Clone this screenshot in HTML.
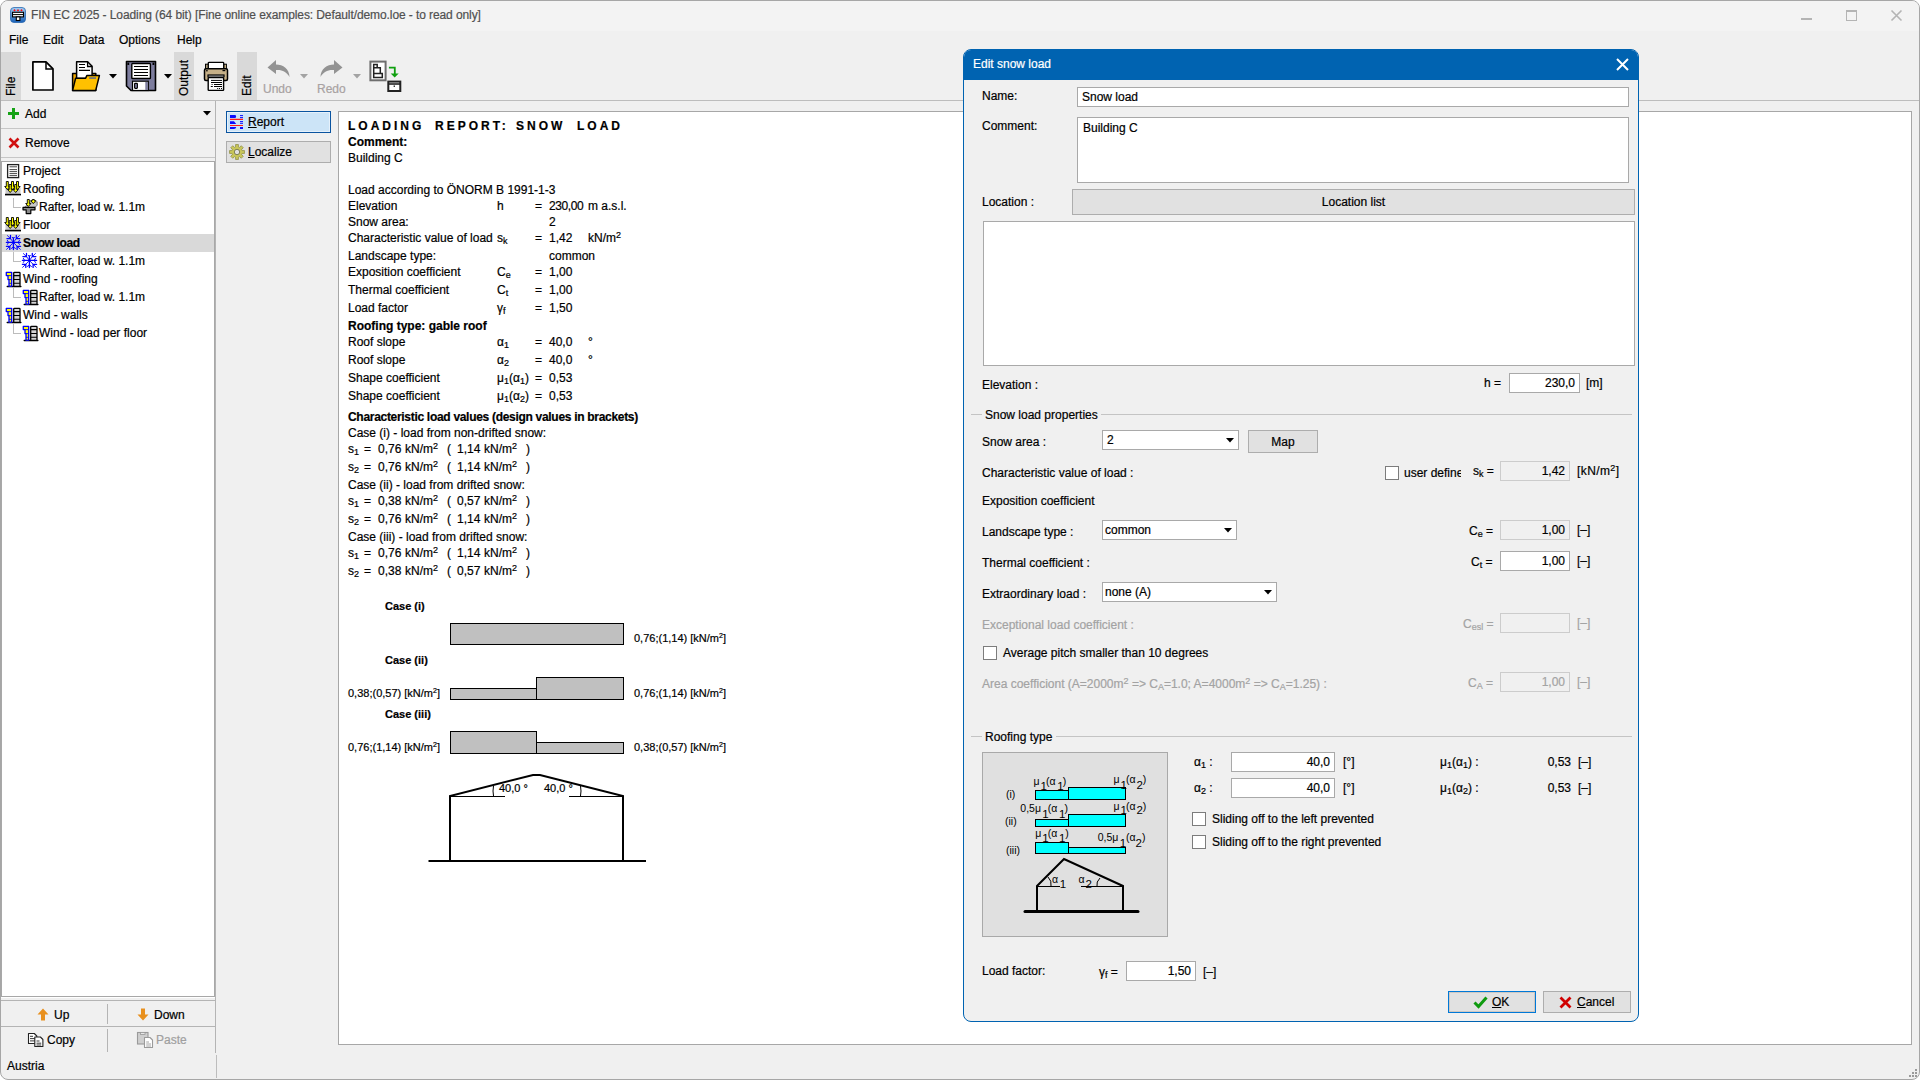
<!DOCTYPE html><html><head><meta charset="utf-8"><title>FIN EC Loading</title><style>html,body{margin:0;padding:0;width:1920px;height:1080px;overflow:hidden;background:#ffffff}
.a{position:absolute;box-sizing:border-box;display:block}
.t{position:absolute;white-space:pre;font-family:"Liberation Sans",sans-serif;-webkit-text-stroke:0.2px currentColor}
.sb{font-size:9px;position:relative;top:2px}
.sp{font-size:9px;position:relative;top:-4px}
.sp2{font-size:7px;position:relative;top:-4px}
u{text-decoration:underline;text-underline-offset:1px}
svg.a{overflow:visible}</style></head><body><div class="a" style="left:0;top:0;width:1920px;height:1080px;border:1px solid #a6a6a6;border-radius:8px;background:#f0f0f0;overflow:hidden">
<div class="a" style="left:0;top:0;width:1918px;height:30px;background:#f3f3f3"></div>
</div>
<svg class="a" style="left:10px;top:7px;" width="16" height="16" viewBox="0 0 16 16">
<defs><linearGradient id="gi" x1="0" y1="0" x2="0" y2="1"><stop offset="0" stop-color="#a8d0f4"/><stop offset="1" stop-color="#1860b8"/></linearGradient></defs>
<rect x="0.5" y="0.5" width="15" height="15" rx="3.5" fill="url(#gi)" stroke="#2a68b0" stroke-width="0.8"/>
<path d="M4.5 4.5 l-1.2 -1 1.2 -1.5 1.2 1.5 z M8 4.5 l-1.2 -1 1.2 -1.5 1.2 1.5 z M11.5 4.5 l-1.2 -1 1.2 -1.5 1.2 1.5 z" fill="#ff1010"/>
<rect x="2.5" y="5.3" width="11" height="4.6" fill="#fff" stroke="#000" stroke-width="1.1"/>
<line x1="3" y1="7.6" x2="13" y2="7.6" stroke="#000" stroke-width="1"/>
<rect x="6.3" y="9.9" width="3.6" height="3.6" fill="#fff" stroke="#000" stroke-width="1.1"/>
</svg>
<div class="t" style="left:31px;top:9px;font-size:12px;line-height:12px;font-weight:400;color:#505050;letter-spacing:-0.09px">FIN EC 2025 - Loading (64 bit) [Fine online examples: Default/demo.loe - to read only]</div>
<div class="a" style="left:1801px;top:18px;width:11px;height:2px;background:#b4b4b4"></div>
<div class="a" style="left:1846px;top:10px;width:11px;height:11px;border:1px solid #b4b4b4;border-top-width:2px"></div>
<svg class="a" style="left:1890px;top:9px;" width="13" height="13" viewBox="0 0 13 13"><path d="M1.5 1.5 L11.5 11.5 M11.5 1.5 L1.5 11.5" stroke="#b4b4b4" stroke-width="1.6"/></svg>
<div class="t" style="left:9px;top:34px;font-size:12px;line-height:12px;font-weight:400;color:#000;">File</div>
<div class="t" style="left:43px;top:34px;font-size:12px;line-height:12px;font-weight:400;color:#000;">Edit</div>
<div class="t" style="left:79px;top:34px;font-size:12px;line-height:12px;font-weight:400;color:#000;">Data</div>
<div class="t" style="left:119px;top:34px;font-size:12px;line-height:12px;font-weight:400;color:#000;">Options</div>
<div class="t" style="left:177px;top:34px;font-size:12px;line-height:12px;font-weight:400;color:#000;">Help</div>
<div class="a" style="left:1px;top:100px;width:1918px;height:1px;background:#bdbdbd"></div>
<div class="a" style="left:1px;top:52px;width:20px;height:48px;background:#d9d9d9"></div>
<div class="t" style="left:5px;top:96px;font-size:12px;line-height:12px;color:#000;transform-origin:0 0;transform:rotate(-90deg)">File</div>
<div class="a" style="left:174px;top:52px;width:20px;height:48px;background:#d9d9d9"></div>
<div class="t" style="left:178px;top:96px;font-size:12px;line-height:12px;color:#000;transform-origin:0 0;transform:rotate(-90deg)">Output</div>
<div class="a" style="left:237px;top:52px;width:20px;height:48px;background:#d9d9d9"></div>
<div class="t" style="left:241px;top:96px;font-size:12px;line-height:12px;color:#000;transform-origin:0 0;transform:rotate(-90deg)">Edit</div>
<svg class="a" style="left:31px;top:60px;" width="24" height="32" viewBox="0 0 24 32"><path d="M1.9 1.9 H15 L22 8.9 V30 H1.9 Z" fill="#fff" stroke="#000" stroke-width="1.7" stroke-linejoin="round"/><path d="M15 2 V9 H22" fill="none" stroke="#000" stroke-width="1.5"/></svg>
<svg class="a" style="left:71px;top:60px;" width="30" height="32" viewBox="0 0 30 32">
<path d="M1.6 13.6 H24.8 V30.4 H1.6 Z" fill="#f0a800" stroke="#000" stroke-width="1.5" stroke-linejoin="round"/>
<path d="M5.6 1.7 H16.6 L21.1 6.2 V18.4 H5.6 Z" fill="#fff" stroke="#000" stroke-width="1.5" stroke-linejoin="round"/>
<path d="M16.6 1.7 V6.5 H21.1" fill="none" stroke="#000" stroke-width="1.3"/>
<path d="M8 4.5 H14 M8 7.5 H14 M8 10.4 H19" stroke="#000" stroke-width="1.1"/>
<path d="M1.6 30.4 L4.6 18.3 H14.6 L15.8 15.6 H28.4 L24.7 30.4 Z" fill="#ffc000" stroke="#000" stroke-width="1.5" stroke-linejoin="round"/>
<rect x="18.2" y="17.3" width="6.8" height="1.5" fill="#5a6a90"/>
</svg>
<svg class="a" style="left:109px;top:74px;" width="8" height="5" viewBox="0 0 8 5"><path d="M0 0 H8 L4 4.5 Z" fill="#000"/></svg>
<svg class="a" style="left:125px;top:60px;" width="32" height="32" viewBox="0 0 32 32">
<path d="M1.5 1.5 H30.5 V30.5 H6 L1.5 26 Z" fill="#7d7d9e" stroke="#000" stroke-width="1.6" stroke-linejoin="round"/>
<rect x="6.8" y="3.5" width="18.6" height="15" rx="0.8" fill="#fff" stroke="#000" stroke-width="1.4"/>
<path d="M9 6.5 H23 M9 9.5 H23 M9 12.5 H23 M9 15.5 H23" stroke="#000" stroke-width="1.1"/>
<rect x="7.5" y="21.2" width="15.8" height="9.3" fill="#fff" stroke="#000" stroke-width="1.2"/>
<rect x="20.3" y="22" width="2.6" height="8" fill="#7d7d9e"/>
<rect x="9.6" y="23.4" width="2.8" height="5" rx="0.6" fill="#7d7d9e" stroke="#000" stroke-width="1.1"/>
<rect x="2.4" y="2.6" width="1.8" height="2.4" fill="#000"/><rect x="27.5" y="2.6" width="1.8" height="2.4" fill="#000"/>
</svg>
<svg class="a" style="left:164px;top:74px;" width="8" height="5" viewBox="0 0 8 5"><path d="M0 0 H8 L4 4.5 Z" fill="#000"/></svg>
<svg class="a" style="left:203px;top:60px;" width="27" height="32" viewBox="0 0 27 32">
<rect x="2.5" y="4.2" width="3" height="5" fill="#a89878" stroke="#000" stroke-width="1"/>
<rect x="20.8" y="4.2" width="2.6" height="5" fill="#d8c090" stroke="#000" stroke-width="1"/>
<rect x="5.3" y="2.3" width="15.4" height="6.4" rx="0.8" fill="#fff" stroke="#000" stroke-width="1.3"/>
<rect x="1.5" y="8.8" width="23" height="11.7" rx="1.5" fill="#c6b088" stroke="#000" stroke-width="1.5"/>
<rect x="3.2" y="10" width="1.4" height="1.4" fill="#000"/><rect x="19.5" y="10" width="2.8" height="1.2" fill="#000"/>
<rect x="4.4" y="14.4" width="17.2" height="3" fill="#000"/>
<rect x="5.6" y="15.5" width="14.8" height="1.2" fill="#9a9a9a"/>
<rect x="5.2" y="17.6" width="15.4" height="12.8" rx="0.6" fill="#fff" stroke="#000" stroke-width="1.4"/>
<path d="M8 20.4 H19 M8 22.5 H19 M11 24.5 H19 M11 26.5 H19 M16 28.5 H17 M18 28.5 H19" stroke="#000" stroke-width="1"/>
<rect x="8.6" y="24" width="1" height="1" fill="#000"/><rect x="7.8" y="26" width="2" height="1" fill="#000"/><rect x="14.2" y="28" width="1" height="1" fill="#000"/>
</svg>
<svg class="a" style="left:266px;top:59px;" width="26" height="19" viewBox="0 0 26 19"><path d="M10 1 L1.5 8.5 L10 15 V11 C16 10.5 20.5 12.5 23.5 18 C23.5 10 17 5.5 10 5.5 Z" fill="#939393"/></svg>
<div class="t" style="left:263px;top:83px;font-size:12px;line-height:12px;font-weight:400;color:#a8a2a2;">Undo</div>
<svg class="a" style="left:300px;top:74px;" width="8" height="5" viewBox="0 0 8 5"><path d="M0 0 H8 L4 4.5 Z" fill="#a3a3a3"/></svg>
<svg class="a" style="left:318px;top:59px;" width="26" height="19" viewBox="0 0 26 19"><g transform="translate(26,0) scale(-1,1)"><path d="M10 1 L1.5 8.5 L10 15 V11 C16 10.5 20.5 12.5 23.5 18 C23.5 10 17 5.5 10 5.5 Z" fill="#939393"/></g></svg>
<div class="t" style="left:317px;top:83px;font-size:12px;line-height:12px;font-weight:400;color:#a8a2a2;">Redo</div>
<svg class="a" style="left:353px;top:74px;" width="8" height="5" viewBox="0 0 8 5"><path d="M0 0 H8 L4 4.5 Z" fill="#a3a3a3"/></svg>
<svg class="a" style="left:368px;top:59px;" width="34" height="34" viewBox="0 0 34 34">
<rect x="2.4" y="2.6" width="15.2" height="18.7" fill="#fff" stroke="#6e6e6e" stroke-width="2"/>
<path d="M5.7 5.5 H9.2 V8.7 H12.3 V14.5 H14.3 V18.4 H5.7 Z M5.7 8.7 H9.2 M5.7 14.5 H12.3" fill="none" stroke="#222" stroke-width="1.5" stroke-linejoin="miter"/>
<path d="M20.9 8.7 H26.8 V15" fill="none" stroke="#10a010" stroke-width="1.8"/>
<path d="M22.7 14.5 H30.7 L26.7 18.6 Z" fill="#10a010"/>
<rect x="20.3" y="22.6" width="12" height="9.4" fill="#fff" stroke="#222" stroke-width="2"/>
<path d="M20.3 25 H32.3" stroke="#222" stroke-width="1.6"/><rect x="25.6" y="26.5" width="1.4" height="1.4" fill="#222"/>
</svg>
<div class="a" style="left:215px;top:101px;width:1px;height:952px;background:#b4b4b4"></div>
<div class="a" style="left:1px;top:128px;width:214px;height:1px;background:#c6c6c6"></div>
<div class="a" style="left:1px;top:157px;width:214px;height:1px;background:#c6c6c6"></div>
<svg class="a" style="left:7px;top:107px;" width="13" height="13" viewBox="0 0 13 13"><path d="M6.5 1 V12 M1 6.5 H12" stroke="#17a317" stroke-width="3"/></svg>
<div class="t" style="left:25px;top:108px;font-size:12px;line-height:12px;font-weight:400;color:#000;">Add</div>
<svg class="a" style="left:203px;top:111px;" width="8" height="5" viewBox="0 0 8 5"><path d="M0 0 H8 L4 4.5 Z" fill="#000"/></svg>
<svg class="a" style="left:8px;top:137px;" width="12" height="12" viewBox="0 0 12 12"><path d="M1.5 1.5 L10.5 10.5 M10.5 1.5 L1.5 10.5" stroke="#d01010" stroke-width="2.6"/></svg>
<div class="t" style="left:25px;top:137px;font-size:12px;line-height:12px;font-weight:400;color:#000;">Remove</div>
<div class="a" style="left:1px;top:161px;width:214px;height:836px;background:#fff;border:1px solid #a8a8a8"></div>
<div class="a" style="left:2px;top:234px;width:212px;height:18px;background:#d9d9d9"></div>
<svg class="a" style="left:5px;top:163px;" width="16" height="16" viewBox="0 0 16 16"><rect x="2.6" y="1.6" width="11" height="13" fill="#fff" stroke="#222" stroke-width="1.3"/><path d="M4.5 3.8 H12 M4.5 6.6 H12 M4.5 8.6 H12 M4.5 10.6 H12 M4.5 12.6 H12" stroke="#333" stroke-width="0.9"/></svg>
<div class="t" style="left:23px;top:165px;font-size:12px;line-height:12px;font-weight:400;color:#000;">Project</div>
<svg class="a" style="left:5px;top:181px;" width="16" height="16" viewBox="0 0 16 16"><path d="M0.5 7 L15.5 5 V13 H0.5 Z" fill="#c9c9c9"/><path d="M0 13.6 H16" stroke="#000" stroke-width="1.6"/><path d="M1.2999999999999998 0.5 H3.3 V5.5 H4.9 L2.3 8.5 L-0.30000000000000027 5.5 H1.2999999999999998 Z" fill="#ffff00" stroke="#000" stroke-width="0.9" stroke-linejoin="round"/><path d="M6.5 0.5 H8.5 V5.5 H10.1 L7.5 8.5 L4.9 5.5 H6.5 Z" fill="#ffff00" stroke="#000" stroke-width="0.9" stroke-linejoin="round"/><path d="M11.5 0.5 H13.5 V5.5 H15.1 L12.5 8.5 L9.9 5.5 H11.5 Z" fill="#ffff00" stroke="#000" stroke-width="0.9" stroke-linejoin="round"/><path d="M4.2 3.5 H6.2 V8.5 H7.800000000000001 L5.2 11.5 L2.6 8.5 H4.2 Z" fill="#ffff00" stroke="#000" stroke-width="0.9" stroke-linejoin="round"/><path d="M9.7 3.5 H11.7 V8.5 H13.299999999999999 L10.7 11.5 L8.1 8.5 H9.7 Z" fill="#ffff00" stroke="#000" stroke-width="0.9" stroke-linejoin="round"/></svg>
<div class="t" style="left:23px;top:183px;font-size:12px;line-height:12px;font-weight:400;color:#000;">Roofing</div>
<div class="a" style="left:13px;top:198px;width:1px;height:10px;background:#bcbcbc"></div>
<div class="a" style="left:13px;top:207px;width:8px;height:1px;background:#bcbcbc"></div>
<svg class="a" style="left:22px;top:199px;" width="16" height="16" viewBox="0 0 16 16"><path d="M2.5 8.4 L8 2.8 H15.2 V6.4 L12.6 8.4 Z" fill="#c9c9c9" stroke="#555" stroke-width="0.7"/><path d="M1 8.4 H13 V10.8 H8.8 V14.6 H4.2 V10.8 H1 Z" fill="#8a8a8a" stroke="#000" stroke-width="1.2" stroke-linejoin="round"/><path d="M5.3 0.5 H7.3 V4.5 H8.9 L6.3 7.5 L3.6999999999999997 4.5 H5.3 Z" fill="#ffff00" stroke="#000" stroke-width="0.9" stroke-linejoin="round"/><path d="M10.3 0.5 H12.3 V1.5999999999999996 H13.9 L11.3 4.6 L8.700000000000001 1.5999999999999996 H10.3 Z" fill="#ffff00" stroke="#000" stroke-width="0.9" stroke-linejoin="round"/></svg>
<div class="t" style="left:39px;top:201px;font-size:12px;line-height:12px;font-weight:400;color:#000;">Rafter, load w. 1.1m</div>
<svg class="a" style="left:5px;top:217px;" width="16" height="16" viewBox="0 0 16 16"><path d="M0.5 7 L15.5 5 V13 H0.5 Z" fill="#c9c9c9"/><path d="M0 13.6 H16" stroke="#000" stroke-width="1.6"/><path d="M1.2999999999999998 0.5 H3.3 V5.5 H4.9 L2.3 8.5 L-0.30000000000000027 5.5 H1.2999999999999998 Z" fill="#ffff00" stroke="#000" stroke-width="0.9" stroke-linejoin="round"/><path d="M6.5 0.5 H8.5 V5.5 H10.1 L7.5 8.5 L4.9 5.5 H6.5 Z" fill="#ffff00" stroke="#000" stroke-width="0.9" stroke-linejoin="round"/><path d="M11.5 0.5 H13.5 V5.5 H15.1 L12.5 8.5 L9.9 5.5 H11.5 Z" fill="#ffff00" stroke="#000" stroke-width="0.9" stroke-linejoin="round"/><path d="M4.2 3.5 H6.2 V8.5 H7.800000000000001 L5.2 11.5 L2.6 8.5 H4.2 Z" fill="#ffff00" stroke="#000" stroke-width="0.9" stroke-linejoin="round"/><path d="M9.7 3.5 H11.7 V8.5 H13.299999999999999 L10.7 11.5 L8.1 8.5 H9.7 Z" fill="#ffff00" stroke="#000" stroke-width="0.9" stroke-linejoin="round"/></svg>
<div class="t" style="left:23px;top:219px;font-size:12px;line-height:12px;font-weight:400;color:#000;">Floor</div>
<svg class="a" style="left:6px;top:235px;" width="16" height="16" viewBox="0 0 16 16"><g stroke="#0000ff" fill="none" stroke-linecap="round" stroke-linejoin="round">
<path d="M7.4 3 V14.6 M0.4 7.4 H14.6" stroke-width="1.3"/>
<path d="M6.4 2.4 L7.4 3.4 L8.4 2.4 M5.4 13.4 L7.4 12 L9.4 13.4 M1.4 5.4 L2.6 7.4 L1.4 9.4 M13.4 5.4 L12.2 7.4 L13.4 9.4" stroke-width="1"/>
<path d="M7.4 7.4 L4.5 3.6 M7.4 7.4 L10.3 3.6 M7.4 7.4 L3.8 11.3 M7.4 7.4 L11.1 11.3" stroke-width="0.9"/>
<path d="M4.5 0.4 V3.6 H0.9 M10.3 0.4 V3.6 H13.9 M3.8 14.4 V11.3 H0.4 M11.1 14.4 V11.3 H14.6" stroke-width="1.3"/>
<path d="M4.5 3.6 L1.4 0.6 M10.3 3.6 L13.4 0.6 M3.8 11.3 L0.6 14.3 M11.1 11.3 L14.3 14.3" stroke-width="0.9"/>
</g></svg>
<div class="t" style="left:23px;top:237px;font-size:12px;line-height:12px;font-weight:700;color:#000;letter-spacing:-0.35px">Snow load</div>
<div class="a" style="left:13px;top:252px;width:1px;height:10px;background:#bcbcbc"></div>
<div class="a" style="left:13px;top:261px;width:8px;height:1px;background:#bcbcbc"></div>
<svg class="a" style="left:22px;top:253px;" width="16" height="16" viewBox="0 0 16 16"><g stroke="#0000ff" fill="none" stroke-linecap="round" stroke-linejoin="round">
<path d="M7.4 3 V14.6 M0.4 7.4 H14.6" stroke-width="1.3"/>
<path d="M6.4 2.4 L7.4 3.4 L8.4 2.4 M5.4 13.4 L7.4 12 L9.4 13.4 M1.4 5.4 L2.6 7.4 L1.4 9.4 M13.4 5.4 L12.2 7.4 L13.4 9.4" stroke-width="1"/>
<path d="M7.4 7.4 L4.5 3.6 M7.4 7.4 L10.3 3.6 M7.4 7.4 L3.8 11.3 M7.4 7.4 L11.1 11.3" stroke-width="0.9"/>
<path d="M4.5 0.4 V3.6 H0.9 M10.3 0.4 V3.6 H13.9 M3.8 14.4 V11.3 H0.4 M11.1 14.4 V11.3 H14.6" stroke-width="1.3"/>
<path d="M4.5 3.6 L1.4 0.6 M10.3 3.6 L13.4 0.6 M3.8 11.3 L0.6 14.3 M11.1 11.3 L14.3 14.3" stroke-width="0.9"/>
</g></svg>
<div class="t" style="left:39px;top:255px;font-size:12px;line-height:12px;font-weight:400;color:#000;">Rafter, load w. 1.1m</div>
<svg class="a" style="left:5px;top:271px;" width="16" height="16" viewBox="0 0 16 16"><path d="M2.2 15.5 H15.9" stroke="#000" stroke-width="1.3" stroke-linecap="round"/>
<path d="M1.3 1.3 H6.7 V15.2 H4 V8.6 H3 V4.6 H1.3 Z" fill="#ffff00" stroke="#0000ff" stroke-width="1.3" stroke-linejoin="round"/>
<path d="M3 4.6 H6.7 M4 8.6 H6.7 M4 12.3 H6.7" stroke="#0000ff" stroke-width="0.9"/>
<rect x="8.7" y="1.3" width="6.3" height="14" rx="0.8" fill="#d4d4d4" stroke="#000" stroke-width="1.3"/>
<path d="M8.7 4.6 H15 M8.7 8.5 H15 M8.7 12.3 H15" stroke="#000" stroke-width="1.1"/></svg>
<div class="t" style="left:23px;top:273px;font-size:12px;line-height:12px;font-weight:400;color:#000;">Wind - roofing</div>
<div class="a" style="left:13px;top:288px;width:1px;height:10px;background:#bcbcbc"></div>
<div class="a" style="left:13px;top:297px;width:8px;height:1px;background:#bcbcbc"></div>
<svg class="a" style="left:22px;top:289px;" width="16" height="16" viewBox="0 0 16 16"><path d="M2.2 15.5 H15.9" stroke="#000" stroke-width="1.3" stroke-linecap="round"/>
<path d="M1.3 1.3 H6.7 V15.2 H4 V8.6 H3 V4.6 H1.3 Z" fill="#ffff00" stroke="#0000ff" stroke-width="1.3" stroke-linejoin="round"/>
<path d="M3 4.6 H6.7 M4 8.6 H6.7 M4 12.3 H6.7" stroke="#0000ff" stroke-width="0.9"/>
<rect x="8.7" y="1.3" width="6.3" height="14" rx="0.8" fill="#d4d4d4" stroke="#000" stroke-width="1.3"/>
<path d="M8.7 4.6 H15 M8.7 8.5 H15 M8.7 12.3 H15" stroke="#000" stroke-width="1.1"/></svg>
<div class="t" style="left:39px;top:291px;font-size:12px;line-height:12px;font-weight:400;color:#000;">Rafter, load w. 1.1m</div>
<svg class="a" style="left:5px;top:307px;" width="16" height="16" viewBox="0 0 16 16"><path d="M2.2 15.5 H15.9" stroke="#000" stroke-width="1.3" stroke-linecap="round"/>
<path d="M1.3 1.3 H6.7 V15.2 H4 V8.6 H3 V4.6 H1.3 Z" fill="#ffff00" stroke="#0000ff" stroke-width="1.3" stroke-linejoin="round"/>
<path d="M3 4.6 H6.7 M4 8.6 H6.7 M4 12.3 H6.7" stroke="#0000ff" stroke-width="0.9"/>
<rect x="8.7" y="1.3" width="6.3" height="14" rx="0.8" fill="#d4d4d4" stroke="#000" stroke-width="1.3"/>
<path d="M8.7 4.6 H15 M8.7 8.5 H15 M8.7 12.3 H15" stroke="#000" stroke-width="1.1"/></svg>
<div class="t" style="left:23px;top:309px;font-size:12px;line-height:12px;font-weight:400;color:#000;">Wind - walls</div>
<div class="a" style="left:13px;top:324px;width:1px;height:10px;background:#bcbcbc"></div>
<div class="a" style="left:13px;top:333px;width:8px;height:1px;background:#bcbcbc"></div>
<svg class="a" style="left:22px;top:325px;" width="16" height="16" viewBox="0 0 16 16"><path d="M2.2 15.5 H15.9" stroke="#000" stroke-width="1.3" stroke-linecap="round"/>
<path d="M1.3 1.3 H6.7 V15.2 H4 V8.6 H3 V4.6 H1.3 Z" fill="#ffff00" stroke="#0000ff" stroke-width="1.3" stroke-linejoin="round"/>
<path d="M3 4.6 H6.7 M4 8.6 H6.7 M4 12.3 H6.7" stroke="#0000ff" stroke-width="0.9"/>
<rect x="8.7" y="1.3" width="6.3" height="14" rx="0.8" fill="#d4d4d4" stroke="#000" stroke-width="1.3"/>
<path d="M8.7 4.6 H15 M8.7 8.5 H15 M8.7 12.3 H15" stroke="#000" stroke-width="1.1"/></svg>
<div class="t" style="left:39px;top:327px;font-size:12px;line-height:12px;font-weight:400;color:#000;">Wind - load per floor</div>
<div class="a" style="left:1px;top:997px;width:214px;height:1px;background:#ffffff"></div>
<div class="a" style="left:1px;top:1000px;width:214px;height:1px;background:#b4b4b4"></div>
<div class="a" style="left:1px;top:1026px;width:214px;height:1px;background:#b4b4b4"></div>
<div class="a" style="left:107px;top:1004px;width:1px;height:20px;background:#b4b4b4"></div>
<div class="a" style="left:107px;top:1029px;width:1px;height:23px;background:#b4b4b4"></div>
<svg class="a" style="left:37px;top:1008px;" width="12" height="13" viewBox="0 0 12 13"><path d="M6 0.5 L11.5 6.5 H8 V12.5 H4 V6.5 H0.5 Z" fill="#e8901e"/></svg>
<div class="t" style="left:54px;top:1009px;font-size:12px;line-height:12px;font-weight:400;color:#000;">Up</div>
<svg class="a" style="left:137px;top:1008px;" width="12" height="13" viewBox="0 0 12 13"><path d="M6 12.5 L11.5 6.5 H8 V0.5 H4 V6.5 H0.5 Z" fill="#e8901e"/></svg>
<div class="t" style="left:154px;top:1009px;font-size:12px;line-height:12px;font-weight:400;color:#000;">Down</div>
<svg class="a" style="left:27px;top:1032px;" width="18" height="17" viewBox="0 0 18 17"><path d="M1.5 1.5 H7.3 L9.8 4 V11.5 H1.5 Z" fill="#fff" stroke="#222" stroke-width="1.1" stroke-linejoin="round"/><path d="M3 4.3 H6 M3 6.6 H8 M3 8.9 H8" stroke="#222" stroke-width="0.9"/><path d="M7.8 5 H13.4 L15.9 7.5 V14.5 H7.8 Z" fill="#fff" stroke="#222" stroke-width="1.1" stroke-linejoin="round"/><path d="M9.5 9 H12.5 M9.5 11.2 H14.2 M9.5 13 H14.2" stroke="#222" stroke-width="0.9"/></svg>
<div class="t" style="left:47px;top:1034px;font-size:12px;line-height:12px;font-weight:400;color:#000;">Copy</div>
<svg class="a" style="left:136px;top:1031px;" width="18" height="18" viewBox="0 0 18 18"><rect x="1.5" y="1.5" width="10.5" height="11.5" fill="#cfcfcf" stroke="#9a9a9a" stroke-width="1.1"/><rect x="4.5" y="1.5" width="4.5" height="2" fill="#e8e8e8" stroke="#9a9a9a" stroke-width="0.8"/><path d="M8.5 6.5 H14 L16.5 9 V16.5 H8.5 Z" fill="#fff" stroke="#9a9a9a" stroke-width="1.1" stroke-linejoin="round"/><path d="M10.2 11 H13 M10.2 13 H15 M10.2 15 H15" stroke="#9a9a9a" stroke-width="0.9"/></svg>
<div class="t" style="left:156px;top:1034px;font-size:12px;line-height:12px;font-weight:400;color:#9f9f9f;">Paste</div>
<div class="t" style="left:7px;top:1060px;font-size:12px;line-height:12px;font-weight:400;color:#000;">Austria</div>
<div class="a" style="left:216px;top:1055px;width:1px;height:23px;background:#bdbdbd"></div>
<div class="a" style="left:226px;top:111px;width:105px;height:22px;background:#cce4f7;border:1px solid #0a54a0;box-shadow:inset 0 0 0 1px #e6f1fb"></div>
<svg class="a" style="left:229px;top:114px;" width="16" height="17" viewBox="0 0 16 17">
<path d="M1 1 H6.5 L7.2 2.5 L6.5 4 H1 Z M1 7.2 H5 L7.2 9.9 H1 Z M1 13 H7.2 Q7 15 5 15 H1 Z" fill="#0a0aff"/>
<path d="M1 5.4 H14 M1 11.5 H14" stroke="#ff1a1a" stroke-width="1.1"/>
<path d="M11 1.6 H14 M11 3.6 H14 M11 7.6 H14 M11 9.3 H14" stroke="#0a0aff" stroke-width="1"/>
<rect x="11" y="13" width="3" height="2" fill="#0a0aff"/>
</svg>
<div class="t" style="left:248px;top:116px;font-size:12px;line-height:12px;font-weight:400;color:#000;"><u>R</u>eport</div>
<div class="a" style="left:226px;top:141px;width:105px;height:22px;background:#e1e1e1;border:1px solid #adadad"></div>
<svg class="a" style="left:228px;top:143px;" width="18" height="18" viewBox="0 0 18 18">
<path d="M14.11 7.59 L16.46 7.56 L16.46 10.44 L14.11 10.41 L13.61 11.61 L15.29 13.26 L13.26 15.29 L11.61 13.61 L10.41 14.11 L10.44 16.46 L7.56 16.46 L7.59 14.11 L6.39 13.61 L4.74 15.29 L2.71 13.26 L4.39 11.61 L3.89 10.41 L1.54 10.44 L1.54 7.56 L3.89 7.59 L4.39 6.39 L2.71 4.74 L4.74 2.71 L6.39 4.39 L7.59 3.89 L7.56 1.54 L10.44 1.54 L10.41 3.89 L11.61 4.39 L13.26 2.71 L15.29 4.74 L13.61 6.39 Z" fill="#c8c65a" stroke="#8a8840" stroke-width="0.7" stroke-linejoin="round"/>
<circle cx="9" cy="9" r="2.7" fill="#e1e1e1" stroke="#6a6a40" stroke-width="0.8"/>
</svg>
<div class="t" style="left:248px;top:146px;font-size:12px;line-height:12px;font-weight:400;color:#000;"><u>L</u>ocalize</div>
<div class="a" style="left:338px;top:111px;width:1574px;height:934px;background:#fff;border:1px solid #a7a7a7"></div>
<div class="t" style="left:348px;top:120px;font-size:12px;line-height:12px;font-weight:700;color:#000;letter-spacing:3px">LOADING</div>
<div class="t" style="left:435px;top:120px;font-size:12px;line-height:12px;font-weight:700;color:#000;letter-spacing:3px">REPORT:</div>
<div class="t" style="left:516px;top:120px;font-size:12px;line-height:12px;font-weight:700;color:#000;letter-spacing:3px">SNOW</div>
<div class="t" style="left:577px;top:120px;font-size:12px;line-height:12px;font-weight:700;color:#000;letter-spacing:3px">LOAD</div>
<div class="t" style="left:348px;top:136px;font-size:12px;line-height:12px;font-weight:700;color:#000;">Comment:</div>
<div class="t" style="left:348px;top:152px;font-size:12px;line-height:12px;font-weight:400;color:#000;">Building C</div>
<div class="t" style="left:348px;top:184px;font-size:12px;line-height:12px;font-weight:400;color:#000;">Load according to ÖNORM B 1991-1-3</div>
<div class="t" style="left:348px;top:200px;font-size:12px;line-height:12px;font-weight:400;color:#000;">Elevation</div>
<div class="t" style="left:497px;top:200px;font-size:12px;line-height:12px;font-weight:400;color:#000;">h</div>
<div class="t" style="left:535px;top:200px;font-size:12px;line-height:12px;font-weight:400;color:#000;">=</div>
<div class="t" style="left:549px;top:200px;font-size:12px;line-height:12px;font-weight:400;color:#000;"><span style="letter-spacing:-0.4px">230,00</span></div>
<div class="t" style="left:588px;top:200px;font-size:12px;line-height:12px;font-weight:400;color:#000;">m a.s.l.</div>
<div class="t" style="left:348px;top:216px;font-size:12px;line-height:12px;font-weight:400;color:#000;">Snow area:</div>
<div class="t" style="left:549px;top:216px;font-size:12px;line-height:12px;font-weight:400;color:#000;">2</div>
<div class="t" style="left:348px;top:232px;font-size:12px;line-height:12px;font-weight:400;color:#000;">Characteristic value of load</div>
<div class="t" style="left:497px;top:232px;font-size:12px;line-height:12px;font-weight:400;color:#000;">s<span class="sb">k</span></div>
<div class="t" style="left:535px;top:232px;font-size:12px;line-height:12px;font-weight:400;color:#000;">=</div>
<div class="t" style="left:549px;top:232px;font-size:12px;line-height:12px;font-weight:400;color:#000;">1,42</div>
<div class="t" style="left:588px;top:232px;font-size:12px;line-height:12px;font-weight:400;color:#000;">kN/m<span class="sp">2</span></div>
<div class="t" style="left:348px;top:250px;font-size:12px;line-height:12px;font-weight:400;color:#000;">Landscape type:</div>
<div class="t" style="left:549px;top:250px;font-size:12px;line-height:12px;font-weight:400;color:#000;">common</div>
<div class="t" style="left:348px;top:266px;font-size:12px;line-height:12px;font-weight:400;color:#000;">Exposition coefficient</div>
<div class="t" style="left:497px;top:266px;font-size:12px;line-height:12px;font-weight:400;color:#000;">C<span class="sb">e</span></div>
<div class="t" style="left:535px;top:266px;font-size:12px;line-height:12px;font-weight:400;color:#000;">=</div>
<div class="t" style="left:549px;top:266px;font-size:12px;line-height:12px;font-weight:400;color:#000;">1,00</div>
<div class="t" style="left:348px;top:284px;font-size:12px;line-height:12px;font-weight:400;color:#000;">Thermal coefficient</div>
<div class="t" style="left:497px;top:284px;font-size:12px;line-height:12px;font-weight:400;color:#000;">C<span class="sb">t</span></div>
<div class="t" style="left:535px;top:284px;font-size:12px;line-height:12px;font-weight:400;color:#000;">=</div>
<div class="t" style="left:549px;top:284px;font-size:12px;line-height:12px;font-weight:400;color:#000;">1,00</div>
<div class="t" style="left:348px;top:302px;font-size:12px;line-height:12px;font-weight:400;color:#000;">Load factor</div>
<div class="t" style="left:497px;top:302px;font-size:12px;line-height:12px;font-weight:400;color:#000;">γ<span class="sb">f</span></div>
<div class="t" style="left:535px;top:302px;font-size:12px;line-height:12px;font-weight:400;color:#000;">=</div>
<div class="t" style="left:549px;top:302px;font-size:12px;line-height:12px;font-weight:400;color:#000;">1,50</div>
<div class="t" style="left:348px;top:320px;font-size:12px;line-height:12px;font-weight:700;color:#000;">Roofing type: gable roof</div>
<div class="t" style="left:348px;top:336px;font-size:12px;line-height:12px;font-weight:400;color:#000;">Roof slope</div>
<div class="t" style="left:497px;top:336px;font-size:12px;line-height:12px;font-weight:400;color:#000;">α<span class="sb">1</span></div>
<div class="t" style="left:535px;top:336px;font-size:12px;line-height:12px;font-weight:400;color:#000;">=</div>
<div class="t" style="left:549px;top:336px;font-size:12px;line-height:12px;font-weight:400;color:#000;">40,0</div>
<div class="t" style="left:588px;top:336px;font-size:12px;line-height:12px;font-weight:400;color:#000;">°</div>
<div class="t" style="left:348px;top:354px;font-size:12px;line-height:12px;font-weight:400;color:#000;">Roof slope</div>
<div class="t" style="left:497px;top:354px;font-size:12px;line-height:12px;font-weight:400;color:#000;">α<span class="sb">2</span></div>
<div class="t" style="left:535px;top:354px;font-size:12px;line-height:12px;font-weight:400;color:#000;">=</div>
<div class="t" style="left:549px;top:354px;font-size:12px;line-height:12px;font-weight:400;color:#000;">40,0</div>
<div class="t" style="left:588px;top:354px;font-size:12px;line-height:12px;font-weight:400;color:#000;">°</div>
<div class="t" style="left:348px;top:372px;font-size:12px;line-height:12px;font-weight:400;color:#000;">Shape coefficient</div>
<div class="t" style="left:497px;top:372px;font-size:12px;line-height:12px;font-weight:400;color:#000;">μ<span class="sb">1</span>(α<span class="sb">1</span>)</div>
<div class="t" style="left:535px;top:372px;font-size:12px;line-height:12px;font-weight:400;color:#000;">=</div>
<div class="t" style="left:549px;top:372px;font-size:12px;line-height:12px;font-weight:400;color:#000;">0,53</div>
<div class="t" style="left:348px;top:390px;font-size:12px;line-height:12px;font-weight:400;color:#000;">Shape coefficient</div>
<div class="t" style="left:497px;top:390px;font-size:12px;line-height:12px;font-weight:400;color:#000;">μ<span class="sb">1</span>(α<span class="sb">2</span>)</div>
<div class="t" style="left:535px;top:390px;font-size:12px;line-height:12px;font-weight:400;color:#000;">=</div>
<div class="t" style="left:549px;top:390px;font-size:12px;line-height:12px;font-weight:400;color:#000;">0,53</div>
<div class="t" style="left:348px;top:411px;font-size:12px;line-height:12px;font-weight:700;color:#000;letter-spacing:-0.3px">Characteristic load values (design values in brackets)</div>
<div class="t" style="left:348px;top:427px;font-size:12px;line-height:12px;font-weight:400;color:#000;">Case (i) - load from non-drifted snow:</div>
<div class="t" style="left:348px;top:443px;font-size:12px;line-height:12px;font-weight:400;color:#000;">s<span class="sb">1</span></div>
<div class="t" style="left:364px;top:443px;font-size:12px;line-height:12px;font-weight:400;color:#000;">=</div>
<div class="t" style="left:378px;top:443px;font-size:12px;line-height:12px;font-weight:400;color:#000;">0,76</div>
<div class="t" style="left:405px;top:443px;font-size:12px;line-height:12px;font-weight:400;color:#000;">kN/m<span class="sp">2</span></div>
<div class="t" style="left:447px;top:443px;font-size:12px;line-height:12px;font-weight:400;color:#000;">(</div>
<div class="t" style="left:457px;top:443px;font-size:12px;line-height:12px;font-weight:400;color:#000;">1,14</div>
<div class="t" style="left:484px;top:443px;font-size:12px;line-height:12px;font-weight:400;color:#000;">kN/m<span class="sp">2</span></div>
<div class="t" style="left:526px;top:443px;font-size:12px;line-height:12px;font-weight:400;color:#000;">)</div>
<div class="t" style="left:348px;top:461px;font-size:12px;line-height:12px;font-weight:400;color:#000;">s<span class="sb">2</span></div>
<div class="t" style="left:364px;top:461px;font-size:12px;line-height:12px;font-weight:400;color:#000;">=</div>
<div class="t" style="left:378px;top:461px;font-size:12px;line-height:12px;font-weight:400;color:#000;">0,76</div>
<div class="t" style="left:405px;top:461px;font-size:12px;line-height:12px;font-weight:400;color:#000;">kN/m<span class="sp">2</span></div>
<div class="t" style="left:447px;top:461px;font-size:12px;line-height:12px;font-weight:400;color:#000;">(</div>
<div class="t" style="left:457px;top:461px;font-size:12px;line-height:12px;font-weight:400;color:#000;">1,14</div>
<div class="t" style="left:484px;top:461px;font-size:12px;line-height:12px;font-weight:400;color:#000;">kN/m<span class="sp">2</span></div>
<div class="t" style="left:526px;top:461px;font-size:12px;line-height:12px;font-weight:400;color:#000;">)</div>
<div class="t" style="left:348px;top:479px;font-size:12px;line-height:12px;font-weight:400;color:#000;">Case (ii) - load from drifted snow:</div>
<div class="t" style="left:348px;top:495px;font-size:12px;line-height:12px;font-weight:400;color:#000;">s<span class="sb">1</span></div>
<div class="t" style="left:364px;top:495px;font-size:12px;line-height:12px;font-weight:400;color:#000;">=</div>
<div class="t" style="left:378px;top:495px;font-size:12px;line-height:12px;font-weight:400;color:#000;">0,38</div>
<div class="t" style="left:405px;top:495px;font-size:12px;line-height:12px;font-weight:400;color:#000;">kN/m<span class="sp">2</span></div>
<div class="t" style="left:447px;top:495px;font-size:12px;line-height:12px;font-weight:400;color:#000;">(</div>
<div class="t" style="left:457px;top:495px;font-size:12px;line-height:12px;font-weight:400;color:#000;">0,57</div>
<div class="t" style="left:484px;top:495px;font-size:12px;line-height:12px;font-weight:400;color:#000;">kN/m<span class="sp">2</span></div>
<div class="t" style="left:526px;top:495px;font-size:12px;line-height:12px;font-weight:400;color:#000;">)</div>
<div class="t" style="left:348px;top:513px;font-size:12px;line-height:12px;font-weight:400;color:#000;">s<span class="sb">2</span></div>
<div class="t" style="left:364px;top:513px;font-size:12px;line-height:12px;font-weight:400;color:#000;">=</div>
<div class="t" style="left:378px;top:513px;font-size:12px;line-height:12px;font-weight:400;color:#000;">0,76</div>
<div class="t" style="left:405px;top:513px;font-size:12px;line-height:12px;font-weight:400;color:#000;">kN/m<span class="sp">2</span></div>
<div class="t" style="left:447px;top:513px;font-size:12px;line-height:12px;font-weight:400;color:#000;">(</div>
<div class="t" style="left:457px;top:513px;font-size:12px;line-height:12px;font-weight:400;color:#000;">1,14</div>
<div class="t" style="left:484px;top:513px;font-size:12px;line-height:12px;font-weight:400;color:#000;">kN/m<span class="sp">2</span></div>
<div class="t" style="left:526px;top:513px;font-size:12px;line-height:12px;font-weight:400;color:#000;">)</div>
<div class="t" style="left:348px;top:531px;font-size:12px;line-height:12px;font-weight:400;color:#000;">Case (iii) - load from drifted snow:</div>
<div class="t" style="left:348px;top:547px;font-size:12px;line-height:12px;font-weight:400;color:#000;">s<span class="sb">1</span></div>
<div class="t" style="left:364px;top:547px;font-size:12px;line-height:12px;font-weight:400;color:#000;">=</div>
<div class="t" style="left:378px;top:547px;font-size:12px;line-height:12px;font-weight:400;color:#000;">0,76</div>
<div class="t" style="left:405px;top:547px;font-size:12px;line-height:12px;font-weight:400;color:#000;">kN/m<span class="sp">2</span></div>
<div class="t" style="left:447px;top:547px;font-size:12px;line-height:12px;font-weight:400;color:#000;">(</div>
<div class="t" style="left:457px;top:547px;font-size:12px;line-height:12px;font-weight:400;color:#000;">1,14</div>
<div class="t" style="left:484px;top:547px;font-size:12px;line-height:12px;font-weight:400;color:#000;">kN/m<span class="sp">2</span></div>
<div class="t" style="left:526px;top:547px;font-size:12px;line-height:12px;font-weight:400;color:#000;">)</div>
<div class="t" style="left:348px;top:565px;font-size:12px;line-height:12px;font-weight:400;color:#000;">s<span class="sb">2</span></div>
<div class="t" style="left:364px;top:565px;font-size:12px;line-height:12px;font-weight:400;color:#000;">=</div>
<div class="t" style="left:378px;top:565px;font-size:12px;line-height:12px;font-weight:400;color:#000;">0,38</div>
<div class="t" style="left:405px;top:565px;font-size:12px;line-height:12px;font-weight:400;color:#000;">kN/m<span class="sp">2</span></div>
<div class="t" style="left:447px;top:565px;font-size:12px;line-height:12px;font-weight:400;color:#000;">(</div>
<div class="t" style="left:457px;top:565px;font-size:12px;line-height:12px;font-weight:400;color:#000;">0,57</div>
<div class="t" style="left:484px;top:565px;font-size:12px;line-height:12px;font-weight:400;color:#000;">kN/m<span class="sp">2</span></div>
<div class="t" style="left:526px;top:565px;font-size:12px;line-height:12px;font-weight:400;color:#000;">)</div>
<div class="t" style="left:385px;top:601px;font-size:11px;line-height:11px;font-weight:700;color:#000;">Case (i)</div>
<div class="t" style="left:385px;top:655px;font-size:11px;line-height:11px;font-weight:700;color:#000;">Case (ii)</div>
<div class="t" style="left:385px;top:709px;font-size:11px;line-height:11px;font-weight:700;color:#000;">Case (iii)</div>
<div class="t" style="left:634px;top:633px;font-size:11px;line-height:11px;font-weight:400;color:#000;">0,76;(1,14) [kN/m<span class="sp2">2</span>]</div>
<div class="t" style="left:348px;top:688px;font-size:11px;line-height:11px;font-weight:400;color:#000;">0,38;(0,57) [kN/m<span class="sp2">2</span>]</div>
<div class="t" style="left:634px;top:688px;font-size:11px;line-height:11px;font-weight:400;color:#000;">0,76;(1,14) [kN/m<span class="sp2">2</span>]</div>
<div class="t" style="left:348px;top:742px;font-size:11px;line-height:11px;font-weight:400;color:#000;">0,76;(1,14) [kN/m<span class="sp2">2</span>]</div>
<div class="t" style="left:634px;top:742px;font-size:11px;line-height:11px;font-weight:400;color:#000;">0,38;(0,57) [kN/m<span class="sp2">2</span>]</div>
<svg class="a" style="left:420px;top:615px;" width="240" height="250" viewBox="0 0 240 250">
<g fill="#c0c0c0" stroke="#000" stroke-width="1">
<rect x="30.5" y="8.5" width="173" height="21"/>
<rect x="30.5" y="73.5" width="86" height="11"/>
<rect x="116.5" y="62.5" width="87" height="22"/>
<rect x="30.5" y="116.5" width="86" height="22"/>
<rect x="116.5" y="127.5" width="87" height="11"/>
</g>
<g fill="none" stroke="#000" stroke-width="2">
<path d="M30 246 V181 L113 160 H120 L203 181 V246"/>
<path d="M8.5 246 H226"/>
</g>
<g fill="none" stroke="#000" stroke-width="1">
<path d="M30 181.5 H85 M73.5 171 Q72.5 176 73.5 181"/>
<path d="M149 181.5 H203 M160.5 171 Q161.5 176 160.5 181"/>
</g>
</svg>
<div class="t" style="left:499px;top:783px;font-size:11px;line-height:11px;font-weight:400;color:#000;">40,0 °</div>
<div class="t" style="left:544px;top:783px;font-size:11px;line-height:11px;font-weight:400;color:#000;">40,0 °</div>
<div class="a" style="left:963px;top:49px;width:676px;height:973px;border:1px solid #0063b1;border-radius:8px;background:#f0f0f0;overflow:hidden"><div class="a" style="left:0;top:0;width:676px;height:30px;background:#0063b1"></div></div>
<div class="t" style="left:973px;top:58px;font-size:12px;line-height:12px;font-weight:400;color:#fff;">Edit snow load</div>
<svg class="a" style="left:1616px;top:58px;" width="13" height="13" viewBox="0 0 13 13"><path d="M1 1 L12 12 M12 1 L1 12" stroke="#fff" stroke-width="2"/></svg>
<div class="t" style="left:982px;top:90px;font-size:12px;line-height:12px;font-weight:400;color:#000;">Name:</div>
<div class="a" style="left:1077px;top:87px;width:552px;height:20px;background:#fff;border:1px solid #a9a9a9"></div>
<div class="t" style="left:1082px;top:91px;font-size:12px;line-height:12px;font-weight:400;color:#000;">Snow load</div>
<div class="t" style="left:982px;top:120px;font-size:12px;line-height:12px;font-weight:400;color:#000;">Comment:</div>
<div class="a" style="left:1077px;top:117px;width:552px;height:66px;background:#fff;border:1px solid #a9a9a9"></div>
<div class="t" style="left:1083px;top:122px;font-size:12px;line-height:12px;font-weight:400;color:#000;">Building C</div>
<div class="t" style="left:982px;top:196px;font-size:12px;line-height:12px;font-weight:400;color:#000;">Location :</div>
<div class="a" style="left:1072px;top:189px;width:563px;height:26px;background:#e1e1e1;border:1px solid #adadad"></div>
<div class="t" style="left:1072px;width:563px;text-align:center;top:196px;font-size:12px;line-height:12px">Location list</div>
<div class="a" style="left:983px;top:221px;width:652px;height:145px;background:#fff;border:1px solid #a9a9a9"></div>
<div class="t" style="left:982px;top:379px;font-size:12px;line-height:12px;font-weight:400;color:#000;">Elevation :</div>
<div class="t" style="left:1484px;top:377px;font-size:12px;line-height:12px;font-weight:400;color:#000;">h =</div>
<div class="a" style="left:1509px;top:373px;width:71px;height:20px;background:#fff;border:1px solid #a9a9a9"></div>
<div class="t" style="left:1509px;width:66px;text-align:right;top:377px;font-size:12px;line-height:12px;color:#000">230,0</div>
<div class="t" style="left:1586px;top:377px;font-size:12px;line-height:12px;font-weight:400;color:#000;">[m]</div>
<div class="a" style="left:971px;top:414px;width:11px;height:1px;background:#c4c4c4"></div>
<div class="a" style="left:1101px;top:414px;width:531px;height:1px;background:#c4c4c4"></div>
<div class="t" style="left:985px;top:409px;font-size:12px;line-height:12px;font-weight:400;color:#000;">Snow load properties</div>
<div class="t" style="left:982px;top:436px;font-size:12px;line-height:12px;font-weight:400;color:#000;">Snow area :</div>
<div class="a" style="left:1102px;top:430px;width:137px;height:20px;background:#fff;border:1px solid #a9a9a9"></div>
<div class="t" style="left:1107px;top:434px;font-size:12px;line-height:12px;font-weight:400;color:#000;">2</div>
<svg class="a" style="left:1226px;top:438px;" width="8" height="5" viewBox="0 0 8 5"><path d="M0 0 H8 L4 4.5 Z" fill="#000"/></svg>
<div class="a" style="left:1248px;top:430px;width:70px;height:23px;background:#e1e1e1;border:1px solid #adadad"></div>
<div class="t" style="left:1248px;width:70px;text-align:center;top:436px;font-size:12px;line-height:12px">Map</div>
<div class="t" style="left:982px;top:467px;font-size:12px;line-height:12px;font-weight:400;color:#000;">Characteristic value of load :</div>
<div class="a" style="left:1385px;top:466px;width:14px;height:14px;background:#fff;border:1px solid #7c7c7c"></div>
<div class="a" style="left:1404px;top:462px;width:57px;height:20px;overflow:hidden"><div class="t" style="left:0;top:5px;font-size:12px;line-height:12px">user defined</div></div>
<div class="t" style="left:1473px;top:465px;font-size:12px;line-height:12px;font-weight:400;color:#000;">s<span class="sb">k</span> =</div>
<div class="a" style="left:1500px;top:461px;width:70px;height:20px;background:#f0f0f0;border:1px solid #cccccc"></div>
<div class="t" style="left:1500px;width:65px;text-align:right;top:465px;font-size:12px;line-height:12px;color:#000">1,42</div>
<div class="t" style="left:1577px;top:465px;font-size:12px;line-height:12px;font-weight:400;color:#000;letter-spacing:0.4px">[kN/m<span class="sp">2</span>]</div>
<div class="t" style="left:982px;top:495px;font-size:12px;line-height:12px;font-weight:400;color:#000;">Exposition coefficient</div>
<div class="t" style="left:982px;top:526px;font-size:12px;line-height:12px;font-weight:400;color:#000;">Landscape type :</div>
<div class="a" style="left:1102px;top:520px;width:135px;height:20px;background:#fff;border:1px solid #a9a9a9"></div>
<div class="t" style="left:1105px;top:524px;font-size:12px;line-height:12px;font-weight:400;color:#000;">common</div>
<svg class="a" style="left:1224px;top:528px;" width="8" height="5" viewBox="0 0 8 5"><path d="M0 0 H8 L4 4.5 Z" fill="#000"/></svg>
<div class="t" style="left:1469px;top:525px;font-size:12px;line-height:12px;font-weight:400;color:#000;">C<span class="sb">e</span> =</div>
<div class="a" style="left:1500px;top:520px;width:70px;height:20px;background:#f0f0f0;border:1px solid #cccccc"></div>
<div class="t" style="left:1500px;width:65px;text-align:right;top:524px;font-size:12px;line-height:12px;color:#000">1,00</div>
<div class="t" style="left:1577px;top:524px;font-size:12px;line-height:12px;font-weight:400;color:#000;">[–]</div>
<div class="t" style="left:982px;top:557px;font-size:12px;line-height:12px;font-weight:400;color:#000;">Thermal coefficient :</div>
<div class="t" style="left:1471px;top:556px;font-size:12px;line-height:12px;font-weight:400;color:#000;">C<span class="sb">t</span> =</div>
<div class="a" style="left:1500px;top:551px;width:70px;height:20px;background:#fff;border:1px solid #a9a9a9"></div>
<div class="t" style="left:1500px;width:65px;text-align:right;top:555px;font-size:12px;line-height:12px;color:#000">1,00</div>
<div class="t" style="left:1577px;top:555px;font-size:12px;line-height:12px;font-weight:400;color:#000;">[–]</div>
<div class="t" style="left:982px;top:588px;font-size:12px;line-height:12px;font-weight:400;color:#000;">Extraordinary load :</div>
<div class="a" style="left:1102px;top:582px;width:175px;height:20px;background:#fff;border:1px solid #a9a9a9"></div>
<div class="t" style="left:1105px;top:586px;font-size:12px;line-height:12px;font-weight:400;color:#000;">none (A)</div>
<svg class="a" style="left:1264px;top:590px;" width="8" height="5" viewBox="0 0 8 5"><path d="M0 0 H8 L4 4.5 Z" fill="#000"/></svg>
<div class="t" style="left:982px;top:619px;font-size:12px;line-height:12px;font-weight:400;color:#a3a3a3;">Exceptional load coefficient :</div>
<div class="t" style="left:1463px;top:618px;font-size:12px;line-height:12px;font-weight:400;color:#a3a3a3;">C<span class="sb">esl</span> =</div>
<div class="a" style="left:1500px;top:613px;width:70px;height:20px;background:#f0f0f0;border:1px solid #cccccc"></div>
<div class="t" style="left:1577px;top:617px;font-size:12px;line-height:12px;font-weight:400;color:#a3a3a3;">[–]</div>
<div class="a" style="left:983px;top:646px;width:14px;height:14px;background:#fff;border:1px solid #7c7c7c"></div>
<div class="t" style="left:1003px;top:647px;font-size:12px;line-height:12px;font-weight:400;color:#000;">Average pitch smaller than 10 degrees</div>
<div class="t" style="left:982px;top:678px;font-size:12px;line-height:12px;font-weight:400;color:#a3a3a3;">Area coefficiont (A=2000m<span class="sp">2</span> =&gt; C<span class="sb">A</span>=1.0; A=4000m<span class="sp">2</span> =&gt; C<span class="sb">A</span>=1.25) :</div>
<div class="t" style="left:1468px;top:677px;font-size:12px;line-height:12px;font-weight:400;color:#a3a3a3;">C<span class="sb">A</span> =</div>
<div class="a" style="left:1500px;top:672px;width:70px;height:20px;background:#f0f0f0;border:1px solid #cccccc"></div>
<div class="t" style="left:1500px;width:65px;text-align:right;top:676px;font-size:12px;line-height:12px;color:#a3a3a3">1,00</div>
<div class="t" style="left:1577px;top:676px;font-size:12px;line-height:12px;font-weight:400;color:#a3a3a3;">[–]</div>
<div class="a" style="left:971px;top:736px;width:11px;height:1px;background:#c4c4c4"></div>
<div class="a" style="left:1056px;top:736px;width:576px;height:1px;background:#c4c4c4"></div>
<div class="t" style="left:985px;top:731px;font-size:12px;line-height:12px;font-weight:400;color:#000;">Roofing type</div>
<div class="a" style="left:982px;top:752px;width:186px;height:185px;background:#e0e0e0;border:1px solid #a9a9a9"></div>
<svg class="a" style="left:983px;top:753px;" width="184" height="183" viewBox="0 0 184 183">
<g fill="#00ffff" stroke="#000" stroke-width="1">
<rect x="52.5" y="37.5" width="33" height="9"/><rect x="85.5" y="34.5" width="57" height="12"/>
<rect x="52.5" y="66.5" width="33" height="7"/><rect x="85.5" y="61.5" width="57" height="12"/>
<rect x="52.5" y="89.5" width="33" height="11"/><rect x="85.5" y="94.5" width="57" height="6"/>
</g>
<g fill="none" stroke="#000" stroke-width="2">
<path d="M54 158 V133 L81 106 L140 133 V158"/>
<path d="M42 158.5 H155" stroke-width="3" stroke-linecap="round"/>
</g>
<g fill="none" stroke="#000" stroke-width="1">
<path d="M54 133.5 H77 M65 124 Q69 128 68 133"/>
<path d="M98 133.5 H140 M117 125 Q113 129 114 133"/>
</g>
<g font-family="Liberation Sans" font-size="10.5" fill="#000"><text x="23" y="44.5">(i)</text><text x="22" y="71.8">(ii)</text><text x="23" y="101">(iii)</text><text x="50.5" y="32">μ</text><text x="57.5" y="36.6" font-size="11.5">1</text><text x="63" y="32">(α</text><text x="74.2" y="36.6" font-size="11.5">1</text><text x="79.7" y="32">)</text><text x="130.5" y="30.4">μ</text><text x="137.5" y="35.7" font-size="11.5">1</text><text x="143" y="30.4">(α</text><text x="153.4" y="35.7" font-size="11.5">2</text><text x="159.7" y="30.4">)</text><text x="37.3" y="58.6">0,5μ</text><text x="59.3" y="64.7" font-size="11.5">1</text><text x="64.7" y="58.6">(α</text><text x="76" y="64.7" font-size="11.5">1</text><text x="81.4" y="58.6">)</text><text x="130.5" y="56.8">μ</text><text x="137.5" y="61.2" font-size="11.5">1</text><text x="143" y="56.8">(α</text><text x="153.4" y="61.2" font-size="11.5">2</text><text x="159.7" y="56.8">)</text><text x="52.2" y="84.1">μ</text><text x="59.3" y="88.5" font-size="11.5">1</text><text x="64.7" y="84.1">(α</text><text x="76" y="88.5" font-size="11.5">1</text><text x="82.3" y="84.1">)</text><text x="114.7" y="87.6">0,5μ</text><text x="136.7" y="93.8" font-size="11.5">1</text><text x="143" y="87.6">(α</text><text x="152.5" y="93.8" font-size="11.5">2</text><text x="158.9" y="87.6">)</text><text x="69" y="129.8">α</text><text x="76.8" y="135.1" font-size="11.5">1</text><text x="95.4" y="129.8">α</text><text x="102.4" y="135.1" font-size="11.5">2</text></g>
</svg>
<div class="t" style="left:1194px;top:756px;font-size:12px;line-height:12px;font-weight:400;color:#000;">α<span class="sb">1</span> :</div>
<div class="a" style="left:1231px;top:752px;width:104px;height:20px;background:#fff;border:1px solid #a9a9a9"></div>
<div class="t" style="left:1231px;width:99px;text-align:right;top:756px;font-size:12px;line-height:12px;color:#000">40,0</div>
<div class="t" style="left:1343px;top:756px;font-size:12px;line-height:12px;font-weight:400;color:#000;">[°]</div>
<div class="t" style="left:1440px;top:756px;font-size:12px;line-height:12px;font-weight:400;color:#000;">μ<span class="sb">1</span>(α<span class="sb">1</span>) :</div>
<div class="t" style="left:1500px;width:71px;text-align:right;top:756px;font-size:12px;line-height:12px">0,53</div>
<div class="t" style="left:1578px;top:756px;font-size:12px;line-height:12px;font-weight:400;color:#000;">[–]</div>
<div class="t" style="left:1194px;top:782px;font-size:12px;line-height:12px;font-weight:400;color:#000;">α<span class="sb">2</span> :</div>
<div class="a" style="left:1231px;top:778px;width:104px;height:20px;background:#fff;border:1px solid #a9a9a9"></div>
<div class="t" style="left:1231px;width:99px;text-align:right;top:782px;font-size:12px;line-height:12px;color:#000">40,0</div>
<div class="t" style="left:1343px;top:782px;font-size:12px;line-height:12px;font-weight:400;color:#000;">[°]</div>
<div class="t" style="left:1440px;top:782px;font-size:12px;line-height:12px;font-weight:400;color:#000;">μ<span class="sb">1</span>(α<span class="sb">2</span>) :</div>
<div class="t" style="left:1500px;width:71px;text-align:right;top:782px;font-size:12px;line-height:12px">0,53</div>
<div class="t" style="left:1578px;top:782px;font-size:12px;line-height:12px;font-weight:400;color:#000;">[–]</div>
<div class="a" style="left:1192px;top:812px;width:14px;height:14px;background:#fff;border:1px solid #7c7c7c"></div>
<div class="t" style="left:1212px;top:813px;font-size:12px;line-height:12px;font-weight:400;color:#000;">Sliding off to the left prevented</div>
<div class="a" style="left:1192px;top:835px;width:14px;height:14px;background:#fff;border:1px solid #7c7c7c"></div>
<div class="t" style="left:1212px;top:836px;font-size:12px;line-height:12px;font-weight:400;color:#000;">Sliding off to the right prevented</div>
<div class="t" style="left:982px;top:965px;font-size:12px;line-height:12px;font-weight:400;color:#000;">Load factor:</div>
<div class="t" style="left:1099px;top:966px;font-size:12px;line-height:12px;font-weight:400;color:#000;">γ<span class="sb">f</span> =</div>
<div class="a" style="left:1126px;top:961px;width:70px;height:20px;background:#fff;border:1px solid #a9a9a9"></div>
<div class="t" style="left:1126px;width:65px;text-align:right;top:965px;font-size:12px;line-height:12px;color:#000">1,50</div>
<div class="t" style="left:1203px;top:966px;font-size:12px;line-height:12px;font-weight:400;color:#000;">[–]</div>
<div class="a" style="left:1448px;top:991px;width:88px;height:22px;background:#e1e1e1;border:1px solid #0078d7;box-shadow:inset 0 0 0 1px #cfc8c2"></div>
<svg class="a" style="left:1473px;top:996px;" width="15" height="13" viewBox="0 0 15 13"><path d="M1.5 6.5 L5.5 10.5 L13.5 1.5" fill="none" stroke="#0e9a0e" stroke-width="3"/></svg>
<div class="t" style="left:1492px;top:996px;font-size:12px;line-height:12px;font-weight:400;color:#000;"><u>O</u>K</div>
<div class="a" style="left:1543px;top:991px;width:88px;height:22px;background:#e1e1e1;border:1px solid #adadad"></div>
<svg class="a" style="left:1559px;top:996px;" width="13" height="13" viewBox="0 0 13 13"><path d="M1.5 1.5 L11.5 11.5 M11.5 1.5 L1.5 11.5" stroke="#d00000" stroke-width="2.8"/></svg>
<div class="t" style="left:1577px;top:996px;font-size:12px;line-height:12px;font-weight:400;color:#000;"><u>C</u>ancel</div>
<div class="a" style="left:1915px;top:1069px;width:2px;height:2px;background:#9a9a9a"></div>
<div class="a" style="left:1912px;top:1072px;width:2px;height:2px;background:#9a9a9a"></div>
<div class="a" style="left:1915px;top:1072px;width:2px;height:2px;background:#9a9a9a"></div>
<div class="a" style="left:1909px;top:1075px;width:2px;height:2px;background:#9a9a9a"></div>
<div class="a" style="left:1912px;top:1075px;width:2px;height:2px;background:#9a9a9a"></div>
<div class="a" style="left:1915px;top:1075px;width:2px;height:2px;background:#9a9a9a"></div></body></html>
